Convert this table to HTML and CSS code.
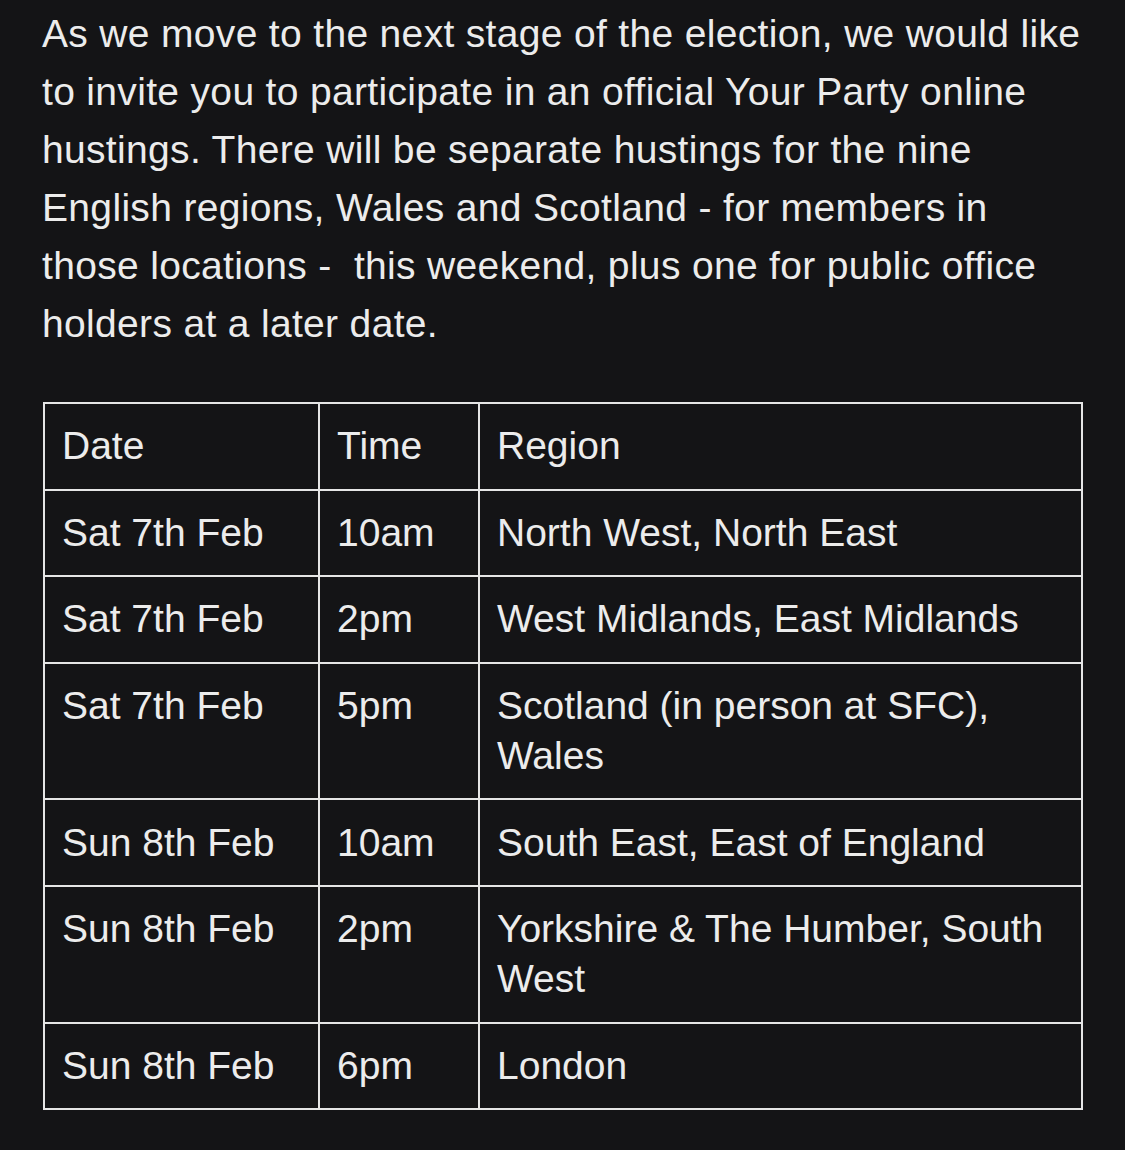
FILE: index.html
```html
<!DOCTYPE html>
<html>
<head>
<meta charset="utf-8">
<link rel="stylesheet" href="styles.css">
</head>
<body>
<div class="page">
<p class="intro">As we move to the next stage of the election, we would like to invite you to participate in an official Your Party online hustings. There will be separate hustings for the nine English regions, Wales and Scotland - for members in those locations -&nbsp; this weekend, plus one for public office holders at a later date.</p>
<table class="schedule">
<colgroup><col class="c-date"><col class="c-time"><col class="c-region"></colgroup>
<tr><td>Date</td><td>Time</td><td>Region</td></tr>
<tr><td>Sat 7th Feb</td><td>10am</td><td>North West, North East</td></tr>
<tr><td>Sat 7th Feb</td><td>2pm</td><td>West Midlands, East Midlands</td></tr>
<tr><td>Sat 7th Feb</td><td>5pm</td><td>Scotland (in person at SFC), Wales</td></tr>
<tr><td>Sun 8th Feb</td><td>10am</td><td>South East, East of England</td></tr>
<tr><td>Sun 8th Feb</td><td>2pm</td><td>Yorkshire &amp; The Humber, South West</td></tr>
<tr><td>Sun 8th Feb</td><td>6pm</td><td>London</td></tr>
</table>
</div>
</body>
</html>
```
FILE: styles.css
```css
html, body {
  margin: 0;
  padding: 0;
  background: #141416;
}
.page {
  width: 1125px;
  height: 1150px;
  box-sizing: border-box;
  padding: 5px 36px 0 42px;
  font-family: "Liberation Sans", Arial, sans-serif;
  color: #ececec;
}
.intro {
  margin: 0 0 49px 0;
  font-size: 39px;
  line-height: 58px;
  letter-spacing: 0.33px;
}
.schedule {
  border-collapse: collapse;
  width: 1038px;
  margin-left: 1px;
  table-layout: fixed;
  font-size: 39px;
  line-height: 50px;
}
.c-date { width: 275px; }
.c-time { width: 160px; }
.c-region { width: 603px; }
.schedule td {
  border: 2px solid #e6e6e6;
  padding: 17.3px 17px 17.3px 17px;
  vertical-align: top;
}
```
